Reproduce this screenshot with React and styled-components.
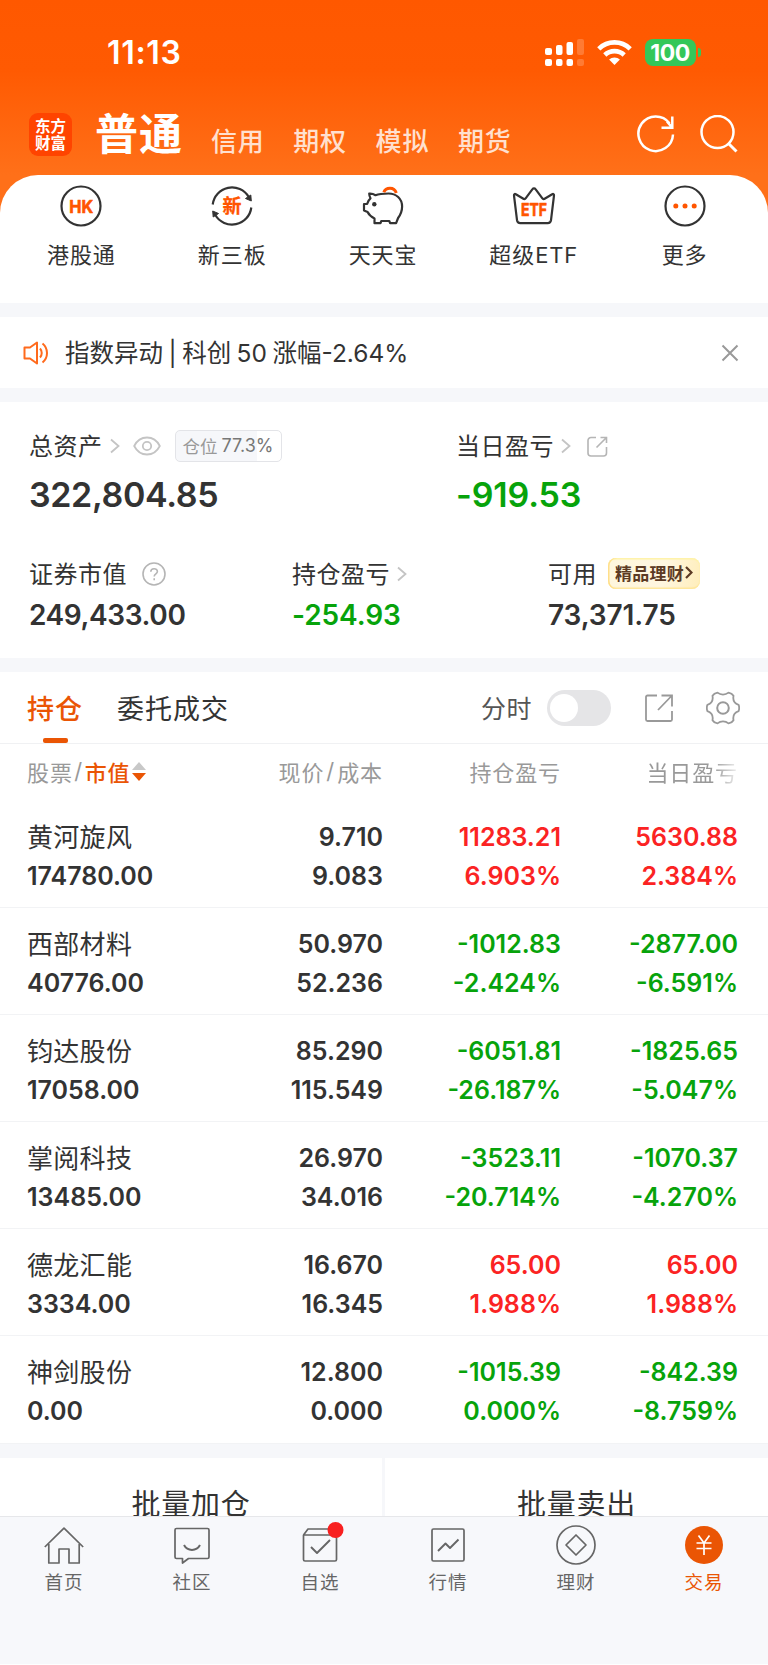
import React from "react";
import styled, { createGlobalStyle } from "styled-components";

const UP = "#fb2323";
const DOWN = "#07a30b";
const ORANGE = "#ea5504";

const GlobalStyle = createGlobalStyle`
  * {
    box-sizing: border-box;
  }
  body {
    margin: 0;
    background: #ffffff;
    font-family: "Inter", "Noto Sans CJK SC", sans-serif;
    color: #333333;
  }
  svg {
    display: block;
    flex: none;
  }
`;

const Phone = styled.div`
  width: 768px;
  height: 1665px;
  overflow: hidden;
  display: flex;
  flex-direction: column;
  white-space: nowrap;
`;

const Scroll = styled.main`
  height: 1516px;
  flex: none;
  overflow: hidden;
  display: flex;
  flex-direction: column;
  background: linear-gradient(180deg, #ff5800 0, #ff5a02 70px, #ff7019 175px, #ff7019 240px, #f6f7fa 241px);
`;

/* ---------- header ---------- */

const StatusBar = styled.div`
  height: 104px;
  flex: none;
  display: flex;
  align-items: center;
  padding: 0 67px 0 107px;
`;

const Time = styled.span`
  flex: 1;
  padding-top: 1px;
  font-size: 32px;
  font-weight: 600;
  line-height: 40px;
  letter-spacing: 0.7px;
  color: #ffffff;
`;

const StatusIcons = styled.div`
  display: flex;
  align-items: center;
  gap: 13px;
`;

const Battery = styled.div`
  display: flex;
  align-items: center;
  gap: 2px;

  span {
    width: 51px;
    height: 27px;
    border-radius: 8px;
    background: #34c759;
    color: #ffffff;
    font-size: 23px;
    font-weight: 700;
    line-height: 28px;
    letter-spacing: -0.4px;
    text-align: center;
    padding-right: 1px;
  }
  i {
    width: 3px;
    height: 9px;
    border-radius: 0 4px 4px 0;
    background: #34c759;
  }
`;

const Header = styled.header`
  height: 71px;
  flex: none;
  display: flex;
  align-items: flex-start;
  padding: 9px 30px 0 29px;
`;

const Logo = styled.div`
  width: 43px;
  height: 43px;
  border-radius: 9px;
  background: #ff4400;
  color: #ffffff;
  font-family: "Noto Sans CJK SC", sans-serif;
  font-size: 15.5px;
  font-weight: 700;
  line-height: 17px;
  text-align: center;
  padding-top: 4px;
`;

const Account = styled.span`
  margin-left: 23px;
  width: 116px;
  font-size: 43px;
  font-weight: 700;
  line-height: 43px;
  letter-spacing: 1px;
  color: #ffffff;
`;

const Markets = styled.nav`
  flex: 1;
  display: flex;
  gap: 28.7px;
  padding-top: 14px;
  font-size: 26px;
  font-weight: 500;
  line-height: 30px;
  letter-spacing: 0.8px;
  color: #ffe0cf;
`;

const HeaderIcons = styled.div`
  display: flex;
  gap: 25px;
  padding-top: 2px;
`;

/* ---------- shortcuts + notice ---------- */

const Shortcuts = styled.section`
  height: 128px;
  flex: none;
  display: flex;
  padding: 9px 8px 0 6px;
  border-radius: 38px 38px 0 0;
  background: #ffffff;
`;

const Shortcut = styled.div`
  flex: 1;
  display: flex;
  flex-direction: column;
  align-items: center;
  gap: 12px;
  font-size: 22px;
  line-height: 30px;
  letter-spacing: 0.9px;
`;

const Gap = styled.div`
  height: 14px;
  flex: none;
  background: #f6f7fa;
`;

const Notice = styled.section`
  height: 71px;
  flex: none;
  display: flex;
  align-items: center;
  padding: 0 29px 0 23px;
  background: #ffffff;

  p {
    flex: 1;
    margin: 0 0 0 15px;
    font-size: 24.5px;
    line-height: 32px;
    word-spacing: -1.4px;
  }
`;

/* ---------- assets ---------- */

const Assets = styled.section`
  height: 256px;
  flex: none;
  padding: 27px 30px 0 29px;
  background: #ffffff;
`;

const AssetRow = styled.div`
  display: grid;
  grid-template-columns: ${(p) => p.$columns};
  margin-bottom: ${(p) => p.$space || 0}px;
`;

const AssetLabel = styled.div`
  height: 34px;
  display: flex;
  align-items: center;
  font-size: 24px;
  letter-spacing: 0.5px;
`;

const AssetTitle = styled.span`
  padding-bottom: 3px;
`;

const Space = styled.span`
  width: ${(p) => p.$w}px;
  flex: none;
`;

const Amount = styled.div`
  font-size: ${(p) => (p.$big ? 34 : 28)}px;
  font-weight: 600;
  line-height: ${(p) => (p.$big ? 42 : 34)}px;
  margin-top: ${(p) => (p.$big ? 11 : 7)}px;
  letter-spacing: ${(p) => p.$track || 0}px;
  color: ${(p) => p.$color || "#333333"};
`;

const Ratio = styled.span`
  width: 107px;
  height: 32px;
  padding-bottom: 1px;
  display: flex;
  align-items: center;
  justify-content: center;
  gap: 4px;
  border: 1px solid #e3e4e8;
  border-radius: 5px;
  background: linear-gradient(90deg, #f6f7fa 77.3%, #ffffff 77.3%);
  font-size: 17.5px;
  letter-spacing: 0;
  color: #999999;

  b {
    font-weight: 400;
    font-size: 18px;
    color: #777777;
  }
`;

const Premium = styled.span`
  width: 92px;
  height: 31px;
  padding-bottom: 2px;
  margin-bottom: 1px;
  display: flex;
  align-items: center;
  justify-content: center;
  gap: 1px;
  border-radius: 8px;
  background: linear-gradient(100deg, #fef6dd, #fff6e0 60%, #ffeebb);
  box-shadow: inset 1.5px 0 0 #ffdf8a, inset 0 -1.5px 1px #ffe69a, inset 0 1.5px 1px #fff3a8;
  font-size: 17px;
  font-weight: 700;
  letter-spacing: 0.3px;
  color: #5c3a24;
`;

/* ---------- positions ---------- */

const Tabs = styled.section`
  height: 72px;
  flex: none;
  display: flex;
  align-items: flex-start;
  padding: 0 28px 0 27px;
  border-bottom: 1px solid #f0f1f3;
  background: #ffffff;
`;

const Tab = styled.div`
  height: 71px;
  margin-right: 34px;
  padding-top: 20px;
  display: flex;
  flex-direction: column;
  align-items: center;
  justify-content: space-between;
  font-size: 27px;
  font-weight: ${(p) => (p.$active ? 500 : 400)};
  line-height: 36px;
  letter-spacing: 1px;
  color: ${(p) => (p.$active ? ORANGE : "#333333")};

  &::after {
    content: "";
    width: 25px;
    height: 5px;
    border-radius: 2px;
    background: ${(p) => (p.$active ? ORANGE : "transparent")};
  }
`;

const Tools = styled.div`
  flex: 1;
  height: 72px;
  display: flex;
  align-items: center;
  justify-content: flex-end;
  font-size: 25px;
  letter-spacing: 0.5px;
  color: #555555;
`;

const ToolLabel = styled.span`
  padding-bottom: 2px;
`;

const Toggle = styled.span`
  width: 64px;
  height: 36px;
  margin: 0 34px 0 15px;
  padding: 4px 3px;
  border-radius: 18px;
  background: #e5e5e7;

  &::after {
    content: "";
    display: block;
    width: 28px;
    height: 28px;
    border-radius: 50%;
    background: #ffffff;
  }
`;

const Row = styled.div`
  display: grid;
  grid-template-columns: 200px 156px 178px 177px;
  padding: 0 30px 0 27px;
  background: #ffffff;
`;

const HeadRow = styled(Row)`
  height: 57px;
  flex: none;
  align-items: center;
  padding-bottom: 3px;
  font-size: 22px;
  letter-spacing: 0.9px;
  color: #999999;
`;

const HeadCell = styled.div`
  display: flex;
  align-items: center;
  justify-content: ${(p) => (p.$left ? "flex-start" : "flex-end")};
  gap: ${(p) => (p.$left ? 1.5 : 2)}px;

  em {
    font-style: normal;
    color: ${ORANGE};
    font-weight: 500;
  }
`;

const FadeCell = styled(HeadCell)`
  mask-image: linear-gradient(90deg, #000 86%, rgba(0, 0, 0, 0.15) 100%);
`;

const Stock = styled(Row)`
  height: 107.1px;
  flex: none;
  padding-top: 17px;
  border-bottom: 1px solid #f2f3f5;
`;

const Cell = styled.div`
  display: flex;
  flex-direction: column;
  text-align: ${(p) => (p.$left ? "left" : "right")};
  font-size: 25px;
  font-weight: 600;
  line-height: 39px;
  color: ${(p) => p.$color || "#333333"};
`;

const Name = styled.span`
  font-size: 26px;
  font-weight: 400;
  letter-spacing: 0.3px;
`;

const Batch = styled.section`
  flex: none;
  display: grid;
  grid-template-columns: 382px 383px;
  column-gap: 3px;
`;

const BatchButton = styled.button`
  height: 88px;
  padding: 0;
  border: 0;
  background: #ffffff;
  font-family: inherit;
  font-size: 29px;
  letter-spacing: 0.7px;
  color: #333333;
`;

/* ---------- bottom bar ---------- */

const BottomBar = styled.nav`
  height: 148px;
  flex: none;
  display: flex;
  border-top: 1px solid #e6e7ea;
  background: #f7f8fb;
`;

const BottomItem = styled.div`
  flex: 1;
  display: flex;
  flex-direction: column;
  align-items: center;
  padding-top: 8px;
  font-size: 18.5px;
  line-height: 26px;
  letter-spacing: 0.9px;
  color: ${(p) => (p.$active ? ORANGE : "#666666")};

  svg {
    margin-bottom: 4px;
    overflow: visible;
  }
`;

/* ---------- icons ---------- */

const SignalIcon = () => (
  <svg width="39" height="27" viewBox="0 0 39 27" fill="#fff">
    <rect x="0" y="9" width="7" height="7" rx="2" />
    <rect x="11" y="6" width="6.5" height="10" rx="2" />
    <rect x="21.5" y="3" width="6.5" height="13" rx="2" />
    <rect x="0" y="20" width="7" height="7" rx="2" />
    <rect x="11" y="20" width="6.5" height="7" rx="2" />
    <rect x="21.5" y="20" width="6.5" height="7" rx="2" />
    <rect x="32" y="0" width="7" height="16" rx="2" opacity="0.2" />
    <rect x="32" y="20" width="7" height="7" rx="2" opacity="0.2" />
  </svg>
);

const WifiIcon = () => (
  <svg width="35" height="25" viewBox="0 0 35 25" fill="none" stroke="#fff" strokeWidth="4.6">
    <path d="M1.8 8.8a22.5 22.5 0 0 1 31.4 0" />
    <path d="M7.800 15a14 14 0 0 1 19.400 0" />
    <path d="M17.500 25l-5.400-5.400a7.800 7.800 0 0 1 10.800 0z" fill="#fff" stroke="none" />
  </svg>
);

const RefreshIcon = () => (
  <svg width="38" height="38" viewBox="0 0 38 38" fill="none" stroke="#fff" strokeWidth="2.5">
    <path d="M36 19.500a17.300 17.300 0 1 1-3.500-11.200" />
    <path d="M35.300 1.500v11.200H24.500M35 12.500l-5-6" />
  </svg>
);

const SearchIcon = () => (
  <svg width="38" height="38" viewBox="0 0 38 38" fill="none" stroke="#fff" strokeWidth="2.5">
    <circle cx="17.5" cy="17" r="16" />
    <path d="M28.500 28.500l8 8" strokeWidth="3" />
  </svg>
);

const iconProps = {
  width: 44,
  height: 44,
  viewBox: "0 0 44 44",
  fill: "none",
  stroke: "#333",
  strokeWidth: 2.2,
  strokeLinejoin: "round",
};

const badgeText = {
  textAnchor: "middle",
  fill: "#ff5500",
  stroke: "#ff5500",
  fontWeight: 700,
  letterSpacing: 0,
};

const HkIcon = () => (
  <svg {...iconProps}>
    <circle cx="22" cy="22" r="19.5" />
    <text x="22.3" y="28.6" fontSize="18" strokeWidth="0.6" textLength="24" lengthAdjust="spacingAndGlyphs" {...badgeText}>HK</text>
  </svg>
);

const NewBoardIcon = () => (
  <svg {...iconProps}>
    <path d="M2.700 20.500a19.400 19.400 0 0 1 36-7.500M41.300 23.500a19.400 19.400 0 0 1-36 7.500" />
    <path d="M35.500 14.500l5.300-3.500.500 6zM8.500 29.500l-5.300 3.500-.500-6z" fill="#333" strokeWidth="1" />
    <text x="22" y="29" fontSize="19" strokeWidth="0.3" {...badgeText}>新</text>
  </svg>
);

const PigIcon = () => (
  <svg {...iconProps}>
    <path d="M14.500 11.200c-2-1.200-4-1.700-6.300-1.500.1 1.800.5 3.200 1.300 4.600-2 1.600-2.800 3.400-3.400 5.700H3v6.500l3.600 1.500c1.400 3 3.400 4.700 6.900 6.500v4.700h6l.800-2.200h8l.800 2.200h6l2-5.200c2.600-3.500 4-7 4-11.500 0-8-6-13-13.600-13-5 0-8.700 0-13 1.700z" />
    <circle cx="13.300" cy="20.300" r="2.200" fill="#333" stroke="none" />
    <path d="M22.800 8.300c1-2.600 3.300-4 6.200-4s5.300 1.700 6.300 4.700" stroke="#ff5500" strokeWidth="3" />
  </svg>
);

const EtfIcon = () => (
  <svg {...iconProps}>
    <path d="M2 11.500c-.2-1.500.8-1.800 1.800-1.300l8 4.800c1 .3 1.500 0 2-.8l6.700-9c.7-1 2.300-1 3 0l6.700 9c.5.8 1 1.100 2 .8l8-4.800c1-.5 2-.2 1.800 1.300l-3 24.700c-.3 2-1.300 3-3.300 3H8.300c-2 0-3-1-3.300-3z" />
    <text x="22" y="32" fontSize="18" strokeWidth="0.7" textLength="26" lengthAdjust="spacingAndGlyphs" {...badgeText}>ETF</text>
  </svg>
);

const MoreIcon = () => (
  <svg {...iconProps}>
    <circle cx="22" cy="22" r="19.5" />
    <g fill="#ff5500" stroke="none">
      <circle cx="12.8" cy="22" r="2.5" />
      <circle cx="22" cy="22" r="2.5" />
      <circle cx="31.2" cy="22" r="2.5" />
    </g>
  </svg>
);

const SpeakerIcon = () => (
  <svg width="27" height="24" viewBox="0 0 27 24" fill="none" stroke="#ff6a1c" strokeWidth="2" strokeLinejoin="round">
    <path d="M1.500 6.500h5.500l7-5v21l-7-5H1.500z" />
    <path d="M17 7.500c2.300 2.500 2.300 6.500 0 9M19.500 2.500c6 5 6 14 0 19" />
  </svg>
);

const CloseIcon = () => (
  <svg width="18" height="18" viewBox="0 0 18 18" stroke="#999" strokeWidth="2">
    <path d="M1.500 1.500l15 15M16.500 1.500l-15 15" />
  </svg>
);

const Chevron = () => (
  <svg width="10" height="16" viewBox="0 0 10 16" fill="none" stroke="#c4c4c4" strokeWidth="1.8">
    <path d="M1 1.500l7.500 6.500L1 14.500" />
  </svg>
);

const EyeIcon = () => (
  <svg width="28" height="20" viewBox="0 0 28 20" fill="none" stroke="#c4c4c4" strokeWidth="1.8">
    <path d="M1.200 10C4 4.500 8.500 1.500 14 1.500S24 4.500 26.800 10C24 15.500 19.500 18.500 14 18.500S4 15.500 1.200 10z" />
    <circle cx="14" cy="10" r="4.200" />
  </svg>
);

const SmallShareIcon = () => (
  <svg width="21" height="21" viewBox="0 0 21 21" fill="none" stroke="#b5b5b5" strokeWidth="1.6">
    <path d="M9 1.500H4a3 3 0 0 0-3 3V17a3 3 0 0 0 3 3h12.500a3 3 0 0 0 3-3v-6" />
    <path d="M13.500 1.500h6v5.500M19 2l-9.500 9.500" />
  </svg>
);

const HelpIcon = () => (
  <svg width="24" height="24" viewBox="0 0 24 24" fill="none" stroke="#b5b5b5" strokeWidth="1.6">
    <circle cx="12" cy="12" r="11" />
    <path d="M8.800 9.800c0-4.200 6.600-4 6.600-.2 0 2.300-3.200 2.400-3.200 5M12.200 16.200v2" />
  </svg>
);

const DarkChevron = () => (
  <svg width="8" height="13" viewBox="0 0 8 13" fill="none" stroke="#5c3a24" strokeWidth="2.2">
    <path d="M1 1l5.500 5.500L1 12" />
  </svg>
);

const ShareIcon = () => (
  <svg width="28" height="28" viewBox="0 0 28 28" fill="none" stroke="#999" strokeWidth="1.8">
    <path d="M12 1.500H2.500a1.500 1.500 0 0 0-1.500 1.500v22.500A1.500 1.500 0 0 0 2.500 27H25.500a1.500 1.500 0 0 0 1.500-1.500V17" />
    <path d="M16.500 1.500H27v11M26.500 2L13 16" />
  </svg>
);

const GearIcon = () => (
  <svg width="34" height="34" viewBox="0 0 34 34" fill="none" stroke="#999" strokeWidth="1.8" strokeLinejoin="round">
    <path d="M11.500 1.600c3.200 2.600 7.800 2.600 11 0q3.500.5 5 3.200c-.8 4.200 1.300 7.700 5.100 9 .8 2.200.8 4.200 0 6.400-3.800 1.300-5.900 4.800-5.100 9q-1.500 2.700-5 3.200c-3.200-2.600-7.800-2.600-11 0q-3.500-.5-5-3.200c.8-4.200-1.300-7.700-5.100-9-.8-2.200-.8-4.200 0-6.400 3.800-1.300 5.900-4.800 5.100-9q1.500-2.700 5-3.200z" />
    <circle cx="17" cy="17" r="5.800" strokeWidth="2" />
  </svg>
);

const SortIcon = () => (
  <svg width="14" height="19" viewBox="0 0 14 19">
    <path d="M7 0l7 8H0z" fill="#c8c8c8" />
    <path d="M7 19l7-8H0z" fill={ORANGE} />
  </svg>
);

const barProps = {
  width: 40,
  height: 40,
  viewBox: "0 0 40 40",
  fill: "none",
  stroke: "#666",
  strokeWidth: 1.7,
  strokeLinejoin: "round",
};

const HomeIcon = () => (
  <svg {...barProps}>
    <path d="M.8 22L20 3.200 39.200 22M4.800 19v19H15V24h10v14h10.200V19" />
  </svg>
);

const ChatIcon = () => (
  <svg {...barProps}>
    <path d="M4.500 3.500h31a1.500 1.500 0 0 1 1.500 1.500v27a1.500 1.500 0 0 1-1.500 1.500H16.500L10.500 38v-4.500h-6A1.500 1.500 0 0 1 3 32V5a1.500 1.500 0 0 1 1.500-1.500z" />
    <path d="M12 20c3.500 6.500 12.500 6.500 16 0" strokeWidth="2" />
  </svg>
);

const PicksIcon = () => (
  <svg {...barProps}>
    <path d="M3.500 10h33v24.500a1.500 1.500 0 0 1-1.500 1.500H5a1.500 1.500 0 0 1-1.500-1.500zM3.500 10L8 4h24l4.500 6" />
    <path d="M11 22l6 6 13-13" strokeWidth="1.9" />
    <circle cx="35.500" cy="5" r="8" fill="#f82020" stroke="none" />
  </svg>
);

const QuotesIcon = () => (
  <svg {...barProps}>
    <rect x="4" y="4" width="32" height="32" rx="1.5" />
    <path d="M10 26l7.500-7.500 4.500 4.500 8.500-8.500" strokeWidth="1.9" />
  </svg>
);

const WealthIcon = () => (
  <svg {...barProps}>
    <circle cx="20" cy="20" r="19" />
    <path d="M20 10l10 10-10 10-10-10z" />
  </svg>
);

const TradeIcon = () => (
  <svg {...barProps}>
    <circle cx="20" cy="20" r="19" fill={ORANGE} stroke="none" />
    <path d="M14.500 10.500l5.500 7.500 5.500-7.500M20 18v12M12.500 18h15M12.500 23.500h15" stroke="#fff" />
  </svg>
);

const shortcuts = [
  { label: "港股通", icon: <HkIcon /> },
  { label: "新三板", icon: <NewBoardIcon /> },
  { label: "天天宝", icon: <PigIcon /> },
  { label: "超级ETF", icon: <EtfIcon /> },
  { label: "更多", icon: <MoreIcon /> },
];

const stocks = [
  { name: "黄河旋风", value: "174780.00", price: "9.710", cost: "9.083", profit: "11283.21", rate: "6.903%", day: "5630.88", dayRate: "2.384%", color: UP },
  { name: "西部材料", value: "40776.00", price: "50.970", cost: "52.236", profit: "-1012.83", rate: "-2.424%", day: "-2877.00", dayRate: "-6.591%", color: DOWN },
  { name: "钧达股份", value: "17058.00", price: "85.290", cost: "115.549", profit: "-6051.81", rate: "-26.187%", day: "-1825.65", dayRate: "-5.047%", color: DOWN },
  { name: "掌阅科技", value: "13485.00", price: "26.970", cost: "34.016", profit: "-3523.11", rate: "-20.714%", day: "-1070.37", dayRate: "-4.270%", color: DOWN },
  { name: "德龙汇能", value: "3334.00", price: "16.670", cost: "16.345", profit: "65.00", rate: "1.988%", day: "65.00", dayRate: "1.988%", color: UP },
  { name: "神剑股份", value: "0.00", price: "12.800", cost: "0.000", profit: "-1015.39", rate: "0.000%", day: "-842.39", dayRate: "-8.759%", color: DOWN },
];

const bottomItems = [
  { label: "首页", icon: <HomeIcon /> },
  { label: "社区", icon: <ChatIcon /> },
  { label: "自选", icon: <PicksIcon /> },
  { label: "行情", icon: <QuotesIcon /> },
  { label: "理财", icon: <WealthIcon /> },
  { label: "交易", icon: <TradeIcon />, active: true },
];

function App() {
  return (
    <Phone>
      <GlobalStyle />
      <Scroll>
        <StatusBar>
          <Time>11:13</Time>
          <StatusIcons>
            <SignalIcon />
            <WifiIcon />
            <Battery>
              <span>100</span>
              <i />
            </Battery>
          </StatusIcons>
        </StatusBar>

        <Header>
          <Logo>
            东方
            <br />
            财富
          </Logo>
          <Account>普通</Account>
          <Markets>
            <span>信用</span>
            <span>期权</span>
            <span>模拟</span>
            <span>期货</span>
          </Markets>
          <HeaderIcons>
            <RefreshIcon />
            <SearchIcon />
          </HeaderIcons>
        </Header>

        <Shortcuts>
          {shortcuts.map((item) => (
            <Shortcut key={item.label}>
              {item.icon}
              <span>{item.label}</span>
            </Shortcut>
          ))}
        </Shortcuts>
        <Gap />

        <Notice>
          <SpeakerIcon />
          <p>指数异动 | 科创 50 涨幅-2.64%</p>
          <CloseIcon />
        </Notice>
        <Gap />

        <Assets>
          <AssetRow $columns="427px 1fr" $space={41}>
            <div>
              <AssetLabel>
                <AssetTitle>总资产</AssetTitle>
                <Space $w={7} />
                <Chevron />
                <Space $w={13} />
                <EyeIcon />
                <Space $w={14} />
                <Ratio>
                  仓位<b>77.3%</b>
                </Ratio>
              </AssetLabel>
              <Amount $big $track={-0.35}>322,804.85</Amount>
            </div>
            <div>
              <AssetLabel>
                <AssetTitle>当日盈亏</AssetTitle>
                <Space $w={7} />
                <Chevron />
                <Space $w={16} />
                <SmallShareIcon />
              </AssetLabel>
              <Amount $big $track={-0.15} $color={DOWN}>-919.53</Amount>
            </div>
          </AssetRow>
          <AssetRow $columns="263px 256px 1fr">
            <div>
              <AssetLabel>
                <AssetTitle>证券市值</AssetTitle>
                <Space $w={15} />
                <HelpIcon />
              </AssetLabel>
              <Amount $track={-0.4}>249,433.00</Amount>
            </div>
            <div>
              <AssetLabel>
                <AssetTitle>持仓盈亏</AssetTitle>
                <Space $w={7} />
                <Chevron />
              </AssetLabel>
              <Amount $track={-0.1} $color={DOWN}>-254.93</Amount>
            </div>
            <div>
              <AssetLabel>
                <AssetTitle>可用</AssetTitle>
                <Space $w={11} />
                <Premium>
                  精品理财
                  <DarkChevron />
                </Premium>
              </AssetLabel>
              <Amount $track={-0.1}>73,371.75</Amount>
            </div>
          </AssetRow>
        </Assets>
        <Gap />

        <Tabs>
          <Tab $active>持仓</Tab>
          <Tab>委托成交</Tab>
          <Tools>
            <ToolLabel>分时</ToolLabel>
            <Toggle />
            <ShareIcon />
            <Space $w={33} />
            <GearIcon />
          </Tools>
        </Tabs>

        <HeadRow>
          <HeadCell $left>
            股票<span>/</span>
            <em>市值</em>
            <SortIcon />
          </HeadCell>
          <HeadCell>
            现价<span>/</span>成本
          </HeadCell>
          <HeadCell>持仓盈亏</HeadCell>
          <FadeCell>当日盈亏</FadeCell>
        </HeadRow>

        {stocks.map((s) => (
          <Stock key={s.name}>
            <Cell $left>
              <Name>{s.name}</Name>
              <span>{s.value}</span>
            </Cell>
            <Cell>
              <span>{s.price}</span>
              <span>{s.cost}</span>
            </Cell>
            <Cell $color={s.color}>
              <span>{s.profit}</span>
              <span>{s.rate}</span>
            </Cell>
            <Cell $color={s.color}>
              <span>{s.day}</span>
              <span>{s.dayRate}</span>
            </Cell>
          </Stock>
        ))}
        <Gap />

        <Batch>
          <BatchButton>批量加仓</BatchButton>
          <BatchButton>批量卖出</BatchButton>
        </Batch>
      </Scroll>

      <BottomBar>
        {bottomItems.map((item) => (
          <BottomItem key={item.label} $active={item.active}>
            {item.icon}
            <span>{item.label}</span>
          </BottomItem>
        ))}
      </BottomBar>
    </Phone>
  );
}

export default App;
